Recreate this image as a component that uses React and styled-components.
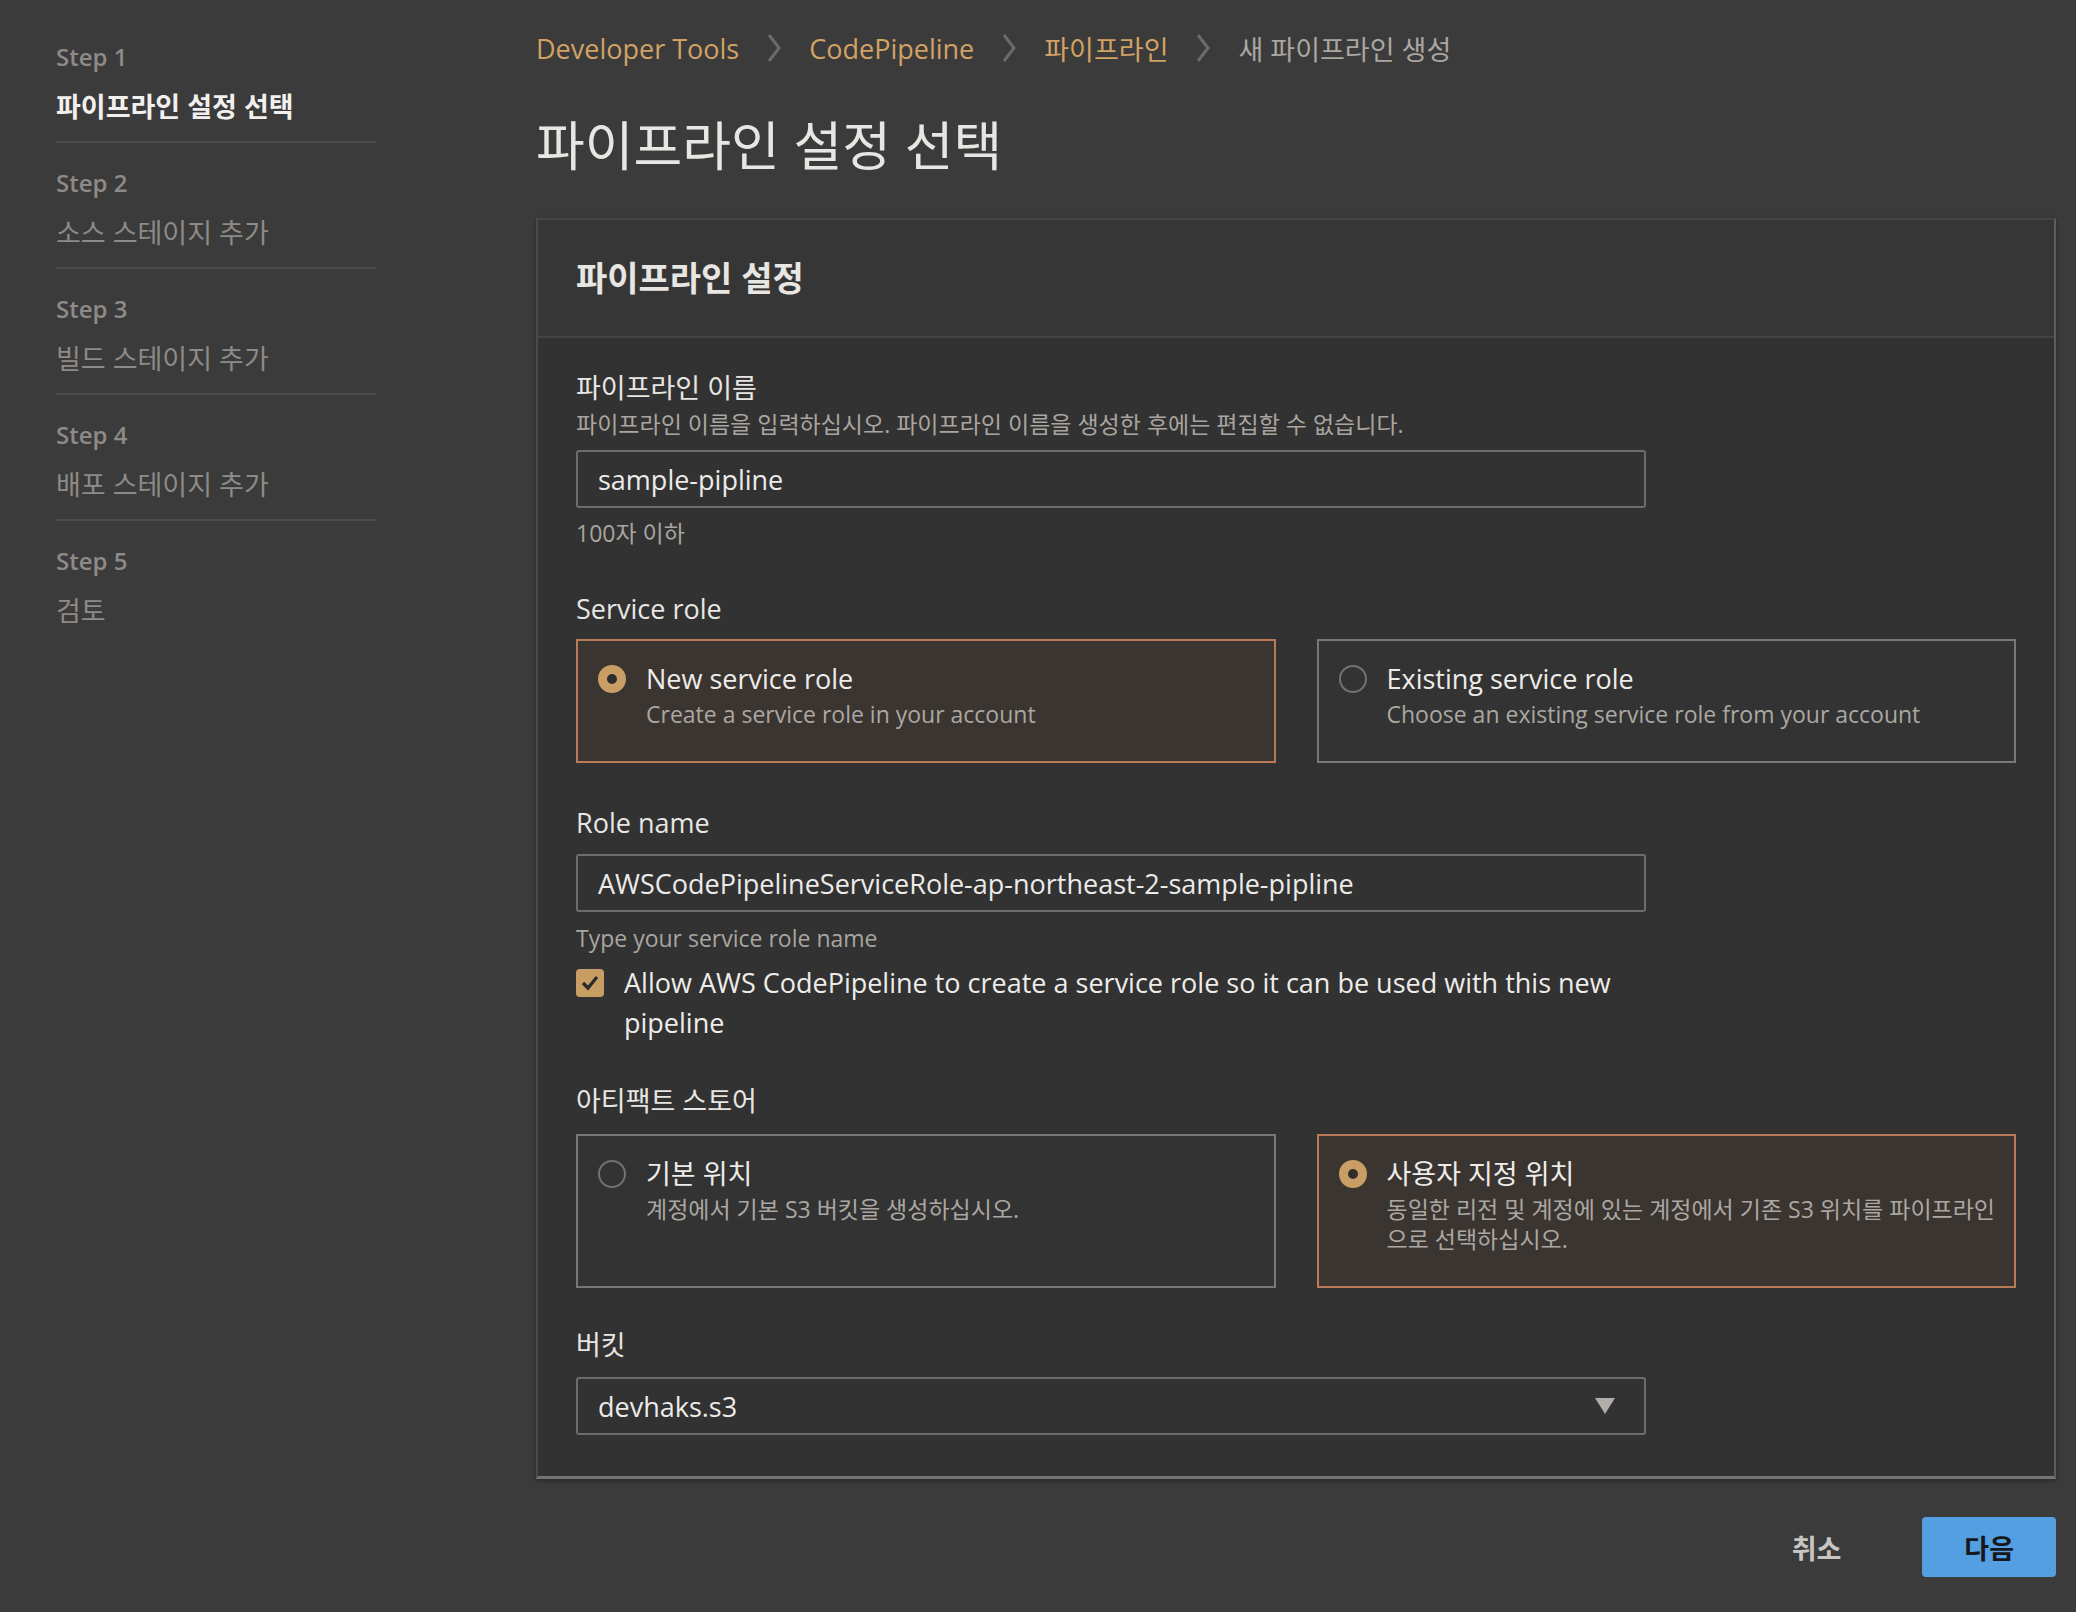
import React from 'react'
import styled, { createGlobalStyle } from 'styled-components'

const GlobalStyle = createGlobalStyle`
  html, body {
    margin: 0;
    padding: 0;
    background: #3b3b3b;
  }
  body {
    font-family: "Open Sans", "Noto Sans CJK KR", sans-serif;
    color: #e8e6e3;
  }
  * { box-sizing: border-box; }
`

const Page = styled.div`
  display: flex;
  min-height: 1612px;
  background: #3b3b3b;
`

const Sidebar = styled.nav`
  width: 376px;
  flex-shrink: 0;
  padding: 17px 0 0 56px;
`

const StepItem = styled.div`
  padding: 23px 0 14px;
  border-bottom: ${(props) => (props.last ? 'none' : '2px solid #4b4b4b')};
`

const StepLabel = styled.div`
  font-size: 24px;
  font-weight: 600;
  line-height: 34px;
  color: #8e8a87;
`

const StepTitle = styled.div`
  margin-top: 13px;
  font-size: 27px;
  line-height: 40px;
  font-weight: ${(props) => (props.active ? 700 : 400)};
  color: ${(props) => (props.active ? '#f2f0ee' : '#8e8a87')};
`

const Main = styled.main`
  flex: 1;
  padding: 28px 20px 0 160px;
`

const Breadcrumbs = styled.div`
  display: flex;
  align-items: center;
  gap: 28px;
  height: 40px;
  font-size: 27px;
`

const Crumb = styled.span`
  color: ${(props) => (props.current ? '#aaa6a2' : '#d2a265')};
`

const PageTitle = styled.h1`
  margin: 46px 0 40px;
  font-size: 53px;
  line-height: 64px;
  font-weight: 400;
  color: #e8e6e3;
`

const Card = styled.section`
  background: #333333;
  border-left: 2px solid #4a4a4a;
  border-top: 2px solid #454545;
  border-right: 2px solid #5c5c5c;
  border-bottom: 3px solid #767370;
  box-shadow: 0 2px 4px rgba(0, 0, 0, 0.3);
`

const CardHeader = styled.div`
  padding: 34px 38px 34px;
  border-bottom: 2px solid #444;
  background: #363636;
`

const CardTitle = styled.h2`
  margin: 0;
  font-size: 34px;
  line-height: 48px;
  font-weight: 700;
  color: #e8e6e3;
`

const CardBody = styled.div`
  padding: 30px 38px 41px;
  background: #323232;
`

const Field = styled.div`
  margin-top: ${(props) => props.gap || 0}px;
`

const Label = styled.div`
  font-size: 27px;
  line-height: 40px;
  color: #e8e6e3;
`

const Hint = styled.div`
  font-size: 23px;
  line-height: 32px;
  color: #a9a5a0;
  margin-top: ${(props) => props.top || 0}px;
`

const InputBox = styled.div`
  position: relative;
  display: flex;
  align-items: center;
  width: 1070px;
  height: 58px;
  margin-top: ${(props) => props.top || 10}px;
  padding: 0 20px;
  border: 2px solid #6f6b69;
  border-radius: 3px;
  background: #323232;
  font-size: 27px;
  color: #ecebe9;
`

const Caret = styled.svg`
  margin-left: auto;
  margin-right: 9px;
`

const TileGrid = styled.div`
  display: grid;
  grid-template-columns: 1fr 1fr;
  gap: 41px;
  margin-top: ${(props) => props.top || 10}px;
`

const Tile = styled.div`
  display: flex;
  gap: 20px;
  padding: 18px 10px 32px 20px;
  border: 2px solid ${(props) => (props.selected ? '#b97b57' : '#7a7775')};
  background: ${(props) => (props.selected ? '#3b3531' : '#333333')};
`

const Radio = styled.span`
  flex-shrink: 0;
  width: 28px;
  height: 28px;
  margin-top: 6px;
  border-radius: 50%;
  border: ${(props) => (props.checked ? '9px solid #c99e64' : '2px solid #75716e')};
  background: ${(props) => (props.checked ? '#2e2e2e' : 'transparent')};
`

const TileText = styled.div`
  display: flex;
  flex-direction: column;
`

const TileTitle = styled.div`
  font-size: 27px;
  line-height: 40px;
  color: #eeece9;
`

const TileDesc = styled.div`
  font-size: 23px;
  line-height: 30px;
  color: #aba7a2;
`

const CheckRow = styled.label`
  display: flex;
  gap: 20px;
  width: 1070px;
  margin-top: 9px;
`

const CheckBox = styled.span`
  flex-shrink: 0;
  display: flex;
  align-items: center;
  justify-content: center;
  width: 28px;
  height: 28px;
  margin-top: 6px;
  border-radius: 4px;
  background: #c99e64;
`

const CheckText = styled.span`
  font-size: 27px;
  line-height: 40px;
  color: #eeece9;
`

const Actions = styled.div`
  display: flex;
  justify-content: flex-end;
  align-items: center;
  gap: 57px;
  margin-top: 38px;
`

const Button = styled.button`
  height: 60px;
  padding: 0 ${(props) => (props.primary ? '42px' : '24px')};
  border: none;
  border-radius: 4px;
  font-family: "Open Sans", "Noto Sans CJK KR", sans-serif;
  font-size: 27px;
  font-weight: 700;
  background: ${(props) => (props.primary ? '#539fe2' : 'transparent')};
  color: ${(props) => (props.primary ? '#16181c' : '#c8c5c1')};
`

const Chevron = () => (
  <svg width="14" height="30" viewBox="0 0 14 30">
    <polyline points="2,2 12,15 2,28" fill="none" stroke="#6e6a68" strokeWidth="3" />
  </svg>
)

const steps = [
  { label: 'Step 1', title: '파이프라인 설정 선택', active: true },
  { label: 'Step 2', title: '소스 스테이지 추가' },
  { label: 'Step 3', title: '빌드 스테이지 추가' },
  { label: 'Step 4', title: '배포 스테이지 추가' },
  { label: 'Step 5', title: '검토' },
]

const crumbs = ['Developer Tools', 'CodePipeline', '파이프라인']

const App = () => {
  return (
    <Page>
      <GlobalStyle />
      <Sidebar>
        {steps.map((s, i) => (
          <StepItem key={s.label} last={i === steps.length - 1}>
            <StepLabel>{s.label}</StepLabel>
            <StepTitle active={s.active}>{s.title}</StepTitle>
          </StepItem>
        ))}
      </Sidebar>
      <Main>
        <Breadcrumbs>
          {crumbs.map((c) => (
            <React.Fragment key={c}>
              <Crumb>{c}</Crumb>
              <Chevron />
            </React.Fragment>
          ))}
          <Crumb current>새 파이프라인 생성</Crumb>
        </Breadcrumbs>
        <PageTitle>파이프라인 설정 선택</PageTitle>
        <Card>
          <CardHeader>
            <CardTitle>파이프라인 설정</CardTitle>
          </CardHeader>
          <CardBody>
            <Field>
              <Label>파이프라인 이름</Label>
              <Hint>파이프라인 이름을 입력하십시오. 파이프라인 이름을 생성한 후에는 편집할 수 없습니다.</Hint>
              <InputBox>sample-pipline</InputBox>
              <Hint top={9}>100자 이하</Hint>
            </Field>

            <Field gap={40}>
              <Label>Service role</Label>
              <TileGrid>
                <Tile selected>
                  <Radio checked />
                  <TileText>
                    <TileTitle>New service role</TileTitle>
                    <TileDesc>Create a service role in your account</TileDesc>
                  </TileText>
                </Tile>
                <Tile>
                  <Radio />
                  <TileText>
                    <TileTitle>Existing service role</TileTitle>
                    <TileDesc>Choose an existing service role from your account</TileDesc>
                  </TileText>
                </Tile>
              </TileGrid>
            </Field>

            <Field gap={40}>
              <Label>Role name</Label>
              <InputBox top={11}>AWSCodePipelineServiceRole-ap-northeast-2-sample-pipline</InputBox>
              <Hint top={10}>Type your service role name</Hint>
              <CheckRow>
                <CheckBox>
                  <svg width="18" height="16" viewBox="0 0 18 16">
                    <polyline points="2,8 7,13 16,2" fill="none" stroke="#2a2a2a" strokeWidth="3.2" />
                  </svg>
                </CheckBox>
                <CheckText>Allow AWS CodePipeline to create a service role so it can be used with this new pipeline</CheckText>
              </CheckRow>
            </Field>

            <Field gap={38}>
              <Label>아티팩트 스토어</Label>
              <TileGrid top={13}>
                <Tile>
                  <Radio />
                  <TileText>
                    <TileTitle>기본 위치</TileTitle>
                    <TileDesc>계정에서 기본 S3 버킷을 생성하십시오.</TileDesc>
                  </TileText>
                </Tile>
                <Tile selected>
                  <Radio checked />
                  <TileText>
                    <TileTitle>사용자 지정 위치</TileTitle>
                    <TileDesc>동일한 리전 및 계정에 있는 계정에서 기존 S3 위치를 파이프라인으로 선택하십시오.</TileDesc>
                  </TileText>
                </Tile>
              </TileGrid>
            </Field>

            <Field gap={37}>
              <Label>버킷</Label>
              <InputBox top={12}>
                devhaks.s3
                <Caret width="20" height="16" viewBox="0 0 20 16">
                  <polygon points="0,0 20,0 10,16" fill="#b1ada8" />
                </Caret>
              </InputBox>
            </Field>
          </CardBody>
        </Card>
        <Actions>
          <Button>취소</Button>
          <Button primary>다음</Button>
        </Actions>
      </Main>
    </Page>
  )
}

export default App
